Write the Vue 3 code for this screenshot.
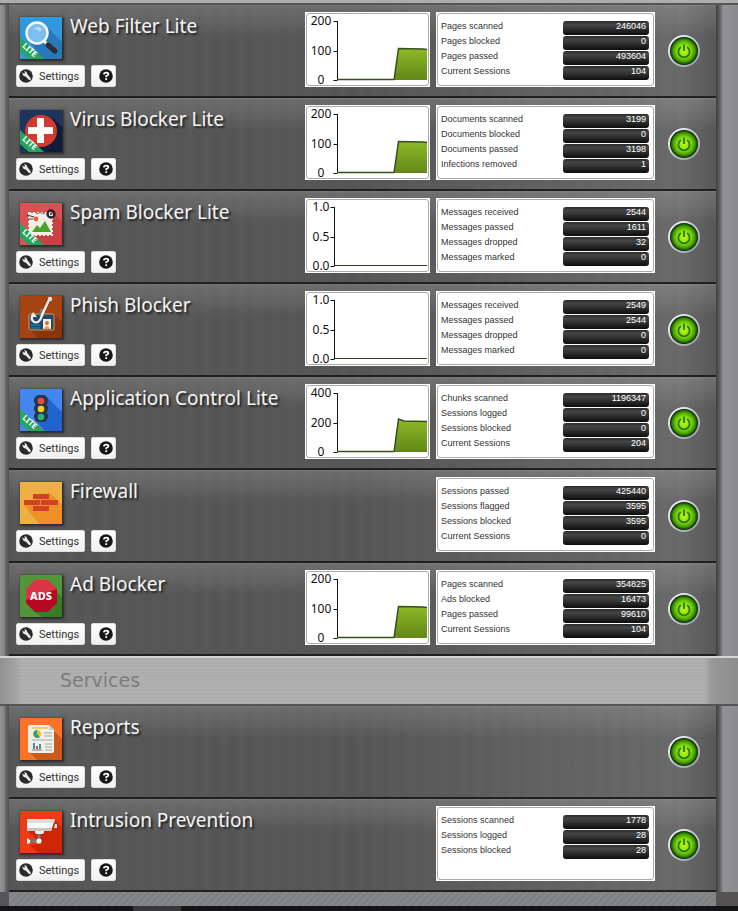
<template>
  <div class="rack">
    <div class="rack-top"></div>

    <section v-for="group in groups" :key="group.id" class="group">
      <header v-if="group.title" class="group-header">
        <h1>{{ group.title }}</h1>
      </header>

      <article v-for="app in group.apps" :key="app.name" class="app-row">
        <div class="app-info">
          <div class="app-heading">
            <svg class="app-icon" viewBox="0 0 42 42" aria-hidden="true">
              <g v-if="app.icon === 'web'">
                <rect width="42" height="42" fill="#3398db" />
                <path d="M25 8L42 25V42H22L9 23Z" fill="#2878b8" />
                <path d="M24 24L28 28" stroke="#e8eef2" stroke-width="3" />
                <path d="M28 28L35 34" stroke="#2b2d33" stroke-width="5" stroke-linecap="round" />
                <circle cx="17" cy="16" r="10.5" fill="#7dbdf0" stroke="#f7fbff" stroke-width="2.4" />
                <path d="M13 13Q17 7 22 12L20 15Q17 11 13 13Z" fill="#b8dcf8" />
              </g>
              <g v-else-if="app.icon === 'virus'">
                <rect width="42" height="42" fill="#1d355e" />
                <path d="M33 8L42 17V42H25L11 29Z" fill="#111d38" />
                <circle cx="21" cy="21" r="16" fill="#d23a30" />
                <path d="M17 8h7v9h9v7h-9v9h-7v-9H8v-7h9z" fill="#fff" />
              </g>
              <g v-else-if="app.icon === 'spam'">
                <rect width="42" height="42" fill="#dc5052" />
                <path d="M33 9L42 18V42H22L10 31Z" fill="#c64247" />
                <rect x="9" y="10" width="23" height="22" fill="#f2eee6" stroke="#f2eee6" stroke-width="2" stroke-dasharray="2 2" />
                <path d="M12 29L17 22L20 25L25 18L31 29Z" fill="#4aa12c" />
                <circle cx="16" cy="16" r="2.4" fill="#e8622d" />
                <path d="M7 12L14 14M8 16H13" stroke="#39424b" stroke-width="1.2" />
                <circle cx="31" cy="11" r="3.5" fill="none" stroke="#22272c" stroke-width="2.4" />
                <circle cx="31" cy="11" r="1" fill="#22272c" />
                <path d="M25 11Q20 8 16 11" fill="none" stroke="#777" stroke-width="1" />
              </g>
              <g v-else-if="app.icon === 'phish'">
                <rect width="42" height="42" fill="#a54312" />
                <path d="M34 18L42 26V42H18L9 33Z" fill="#8b350c" />
                <rect x="9" y="18" width="25" height="16" rx="1" fill="#234673" stroke="#d59b55" stroke-width="1" />
                <rect x="23" y="23" width="8" height="10" fill="#f0eee2" />
                <circle cx="27" cy="27" r="2" fill="#ce7034" />
                <path d="M24 33Q27 27 30 33" fill="#e5a329" />
                <path d="M11 29H20M11 32H20" stroke="#1794a1" stroke-width="1.2" />
                <path d="M20 20V14Q21 11 24 13V20" fill="#817d78" stroke="#746c67" />
                <path d="M29 4L22 19Q20 28 14 26Q10 23 13 18" fill="none" stroke="#f2f2ed" stroke-width="2.3" />
                <path d="M11 21L13 16L17 21" fill="#f2f2ed" />
                <circle cx="30" cy="3" r="2.2" fill="#d8e6ec" />
              </g>
              <g v-else-if="app.icon === 'control'">
                <rect width="42" height="42" fill="#4386ef" />
                <path d="M27 8L42 23V42H25L15 31Z" fill="#2264cc" />
                <path d="M14 9L17 12V17L14 12M28 9L25 12V17L28 12M14 17L17 20V25L14 20M28 17L25 20V25L28 20M14 25L17 28V32L14 28M28 25L25 28V32L28 28" fill="#26374c" stroke="#26374c" />
                <rect x="15" y="6" width="12" height="27" rx="4" fill="#26374c" />
                <circle cx="21" cy="12" r="3.3" fill="#ed4b3d" />
                <circle cx="21" cy="20" r="3.3" fill="#f9cf1c" />
                <circle cx="21" cy="28" r="3.3" fill="#24b47b" />
              </g>
              <g v-else-if="app.icon === 'firewall'">
                <rect width="42" height="42" fill="#efb043" />
                <path d="M29 11L42 22V42H19L4 23Z" fill="#ed9026" />
                <path d="M13 12h16v5H13zM4 18h16v5H4zM21 18h17v5H21zM13 24h16v5H13z" fill="#cf4225" />
              </g>
              <g v-else-if="app.icon === 'ads'">
                <rect width="42" height="42" fill="#52963a" />
                <path d="M36 16L42 22V42H22L13 36Z" fill="#387d24" />
                <path d="M15 5H28L37 14V28L28 37H15L6 28V14Z" fill="#d93546" />
                <path d="M6 25L37 14V28L28 37H15L6 28Z" fill="#b70821" />
                <text x="21" y="25" text-anchor="middle" class="ads-text">ADS</text>
              </g>
              <g v-else-if="app.icon === 'reports'">
                <rect width="42" height="42" fill="#fc7328" />
                <path d="M34 13L42 21V42H17L9 34Z" fill="#cd581c" />
                <path d="M10 7H29L34 12V33Q34 35 32 35H10Q8 35 8 33V9Q8 7 10 7Z" fill="#f1f0e8" />
                <path d="M29 7V12H34Z" fill="#c8ceca" />
                <path d="M12 10H28" stroke="#edc653" stroke-width="1.6" />
                <circle cx="17" cy="16" r="4" fill="#f2bf27" />
                <path d="M17 16V12A4 4 0 1 0 20 19Z" fill="#20a198" />
                <path d="M24 15H32M24 18H32M12 22H33M25 26H32M25 29H32M25 32H32" stroke="#9ca7a7" stroke-width="1" />
                <path d="M14 25V31M20 26V31" stroke="#37969f" stroke-width="2" />
                <path d="M17 28V31" stroke="#d64f58" stroke-width="2" />
                <path d="M12 32H22" stroke="#777" />
              </g>
              <g v-else>
                <rect width="42" height="42" fill="#ed3b15" />
                <path d="M7 19L21 33L10 34L18 42H42V16L35 9Z" fill="#ce2609" />
                <path d="M7 8H35L31 20H7Z" fill="#fafafa" />
                <path d="M7 8H35L34 12H7Z" fill="#dcdcdc" />
                <path d="M7 17H32L31 20H7Z" fill="#c9c6c3" />
                <path d="M35 13H37V17H34" fill="#ddd" />
                <path d="M15 20H24V22L22 23H17L15 22Z" fill="#eee" />
                <path d="M19 23V30M9 30H19" stroke="#77777a" stroke-width="3" />
                <circle cx="19" cy="30" r="2.6" fill="#f7f7f7" />
                <path d="M7 27L10 29V32L7 33Z" fill="#fff" />
              </g>
              <g v-if="app.lite">
                <path d="M0 20L24 42H9L0 34Z" fill="#28a45c" />
                <text transform="translate(8 35) rotate(42)" text-anchor="middle" class="lite-text">LITE</text>
              </g>
            </svg>
            <h2>{{ app.name }}</h2>
          </div>

          <div class="app-actions">
            <button type="button" class="action settings">
              <svg viewBox="0 0 14 14" aria-hidden="true">
                <circle cx="7" cy="7" r="6.8" fill="#292929" />
                <path d="M3.4 3.2L5.2 5L6 3.2L5 2.5Q8 1.8 8.3 5L11.8 9.5Q12 11.4 10.2 11.2L6.7 7.5Q3.5 7.5 3.4 3.2Z" fill="#e9e9e9" />
              </svg>
              <span>Settings</span>
            </button>
            <button type="button" class="action help" :aria-label="'Help for ' + app.name">
              <svg viewBox="0 0 14 14" aria-hidden="true">
                <circle cx="7" cy="7" r="6.8" fill="#171717" />
                <path d="M4.8 5.4Q5 3.6 7.1 3.6Q9.4 3.6 9.4 5.2Q9.4 6.3 7.2 7V8.3" fill="none" stroke="#fff" stroke-width="1.7" />
                <rect x="6.3" y="9.3" width="1.8" height="1.7" fill="#fff" />
              </svg>
            </button>
          </div>
        </div>

        <div v-if="app.scale" class="panel chart">
          <svg viewBox="0 0 121 71" role="img" :aria-label="app.name + ' sessions'">
            <defs>
              <linearGradient :id="'fill-' + app.icon" x1="0" y1="0" x2="0" y2="1">
                <stop offset="0" stop-color="#8fb927" />
                <stop offset="1" stop-color="#628718" />
              </linearGradient>
            </defs>
            <text v-for="(label, i) in app.scale" :key="label" x="14" :y="11 + i * 30 - (i === 2 ? 1 : 0)" text-anchor="middle">{{ label }}</text>
            <path :d="axisPath(app)" fill="none" stroke="#111" />
            <path v-if="app.line" :d="app.line + 'L120 66H87Z'" :fill="`url(#fill-${app.icon})`" />
            <path v-if="app.line" :d="'M30 65.5H87' + app.line.replace('M', 'L')" fill="none" stroke="#36501a" stroke-width="1.5" />
            <path v-else d="M28 65.5H120" stroke="#3a3a22" />
          </svg>
        </div>

        <div v-if="app.stats" class="panel stats">
          <table>
            <tbody>
              <tr v-for="stat in app.stats" :key="stat[0]">
                <th scope="row">{{ stat[0] }}</th>
                <td><span class="value">{{ stat[1] }}</span></td>
              </tr>
            </tbody>
          </table>
        </div>

        <button type="button" class="power" :aria-label="'Turn ' + app.name + ' off'" aria-pressed="true">
          <svg viewBox="0 0 32 32" aria-hidden="true">
            <defs>
              <radialGradient :id="'glow-' + app.icon">
                <stop offset="0" stop-color="#b8fa1c" />
                <stop offset=".5" stop-color="#86e008" />
                <stop offset=".8" stop-color="#459f04" />
                <stop offset="1" stop-color="#12400a" />
              </radialGradient>
              <linearGradient :id="'ring-' + app.icon" x1="0" y1="0" x2="1" y2="1">
                <stop offset="0" stop-color="#fff" />
                <stop offset=".5" stop-color="#c4c8cc" />
                <stop offset="1" stop-color="#8e979d" />
              </linearGradient>
            </defs>
            <circle cx="16" cy="16" r="16" :fill="`url(#ring-${app.icon})`" />
            <circle cx="16" cy="16" r="14" fill="#102610" />
            <circle cx="16" cy="16" r="13.4" :fill="`url(#glow-${app.icon})`" />
            <path d="M12.8 12.1A5.6 5.6 0 1 0 19.2 12.1M16 9.5V16" fill="none" stroke="#2f7405" stroke-width="1.8" />
          </svg>
        </button>
      </article>
    </section>

    <div class="rack-bottom"></div>
    <footer class="taskbar"><span></span></footer>
  </div>
</template>

<script setup>
import { ref } from 'vue'

const sessionLine = 'M87 66L91.5 34.5L116 35L120 35.5'

const groups = ref([
  {
    id: 'apps',
    apps: [
      {
        name: 'Web Filter Lite',
        icon: 'web',
        lite: true,
        scale: ['200', '100', '0'],
        line: sessionLine,
        stats: [['Pages scanned', 246046], ['Pages blocked', 0], ['Pages passed', 493604], ['Current Sessions', 104]]
      },
      {
        name: 'Virus Blocker Lite',
        icon: 'virus',
        lite: true,
        scale: ['200', '100', '0'],
        line: sessionLine,
        stats: [['Documents scanned', 3199], ['Documents blocked', 0], ['Documents passed', 3198], ['Infections removed', 1]]
      },
      {
        name: 'Spam Blocker Lite',
        icon: 'spam',
        lite: true,
        scale: ['1.0', '0.5', '0.0'],
        stats: [['Messages received', 2544], ['Messages passed', 1611], ['Messages dropped', 32], ['Messages marked', 0]]
      },
      {
        name: 'Phish Blocker',
        icon: 'phish',
        scale: ['1.0', '0.5', '0.0'],
        stats: [['Messages received', 2549], ['Messages passed', 2544], ['Messages dropped', 0], ['Messages marked', 0]]
      },
      {
        name: 'Application Control Lite',
        icon: 'control',
        lite: true,
        scale: ['400', '200', '0'],
        line: 'M87 66L91.5 33L97 35L120 35.5',
        stats: [['Chunks scanned', 1196347], ['Sessions logged', 0], ['Sessions blocked', 0], ['Current Sessions', 204]]
      },
      {
        name: 'Firewall',
        icon: 'firewall',
        stats: [['Sessions passed', 425440], ['Sessions flagged', 3595], ['Sessions blocked', 3595], ['Current Sessions', 0]]
      },
      {
        name: 'Ad Blocker',
        icon: 'ads',
        scale: ['200', '100', '0'],
        line: sessionLine,
        stats: [['Pages scanned', 354825], ['Ads blocked', 16473], ['Pages passed', 99610], ['Current Sessions', 104]]
      }
    ]
  },
  {
    id: 'services',
    title: 'Services',
    apps: [
      { name: 'Reports', icon: 'reports' },
      {
        name: 'Intrusion Prevention',
        icon: 'intrusion',
        stats: [['Sessions scanned', 1778], ['Sessions logged', 28], ['Sessions blocked', 28]]
      }
    ]
  }
])

// Decimal labels are narrower, so their axis sits closer to them
const axisPath = (app) => {
  const x = app.line ? 30.5 : 27.5
  return `M${x} 7V66M${x - 4} 7.5H${x}M${x - 4} 37.5H${x}M${x - 4} 66.5H${x}`
}
</script>

<style>
body {
  margin: 0;
  background: #111;
}
</style>

<style scoped>
.rack {
  font-family: "Noto Sans", sans-serif;
  background: linear-gradient(90deg, #949496 0, #868688 4px, #626264 6px, #505052 9px, transparent 9px),
    linear-gradient(270deg, #8b8b8d 0, #929294 15px, #626264 18px, #505052 20px, #3c3c3e 22px, #555 22px);
}

.rack-top {
  box-sizing: border-box;
  height: 5px;
  background: #adadad;
  border-bottom: 2px solid #555;
}

.group-header {
  box-sizing: border-box;
  display: flex;
  align-items: center;
  height: 50px;
  padding: 0 60px 2px;
  border-top: 2px solid #d6d6d6;
  border-bottom: 2px solid #555557;
  background: linear-gradient(90deg, #929292 0, #a0a0a0 14px, transparent 22px, transparent calc(100% - 34px), #989898 calc(100% - 26px), #8c8c8c 100%),
    repeating-linear-gradient(180deg, #aaa 0, #b1b1b1 2px, #acacac 5px, #b3b3b3 7px);
}

.group-header h1 {
  margin: 0;
  color: #7d7d7d;
  font-family: "DejaVu Sans", sans-serif;
  font-size: 19px;
  font-weight: normal;
}

.app-row {
  box-sizing: border-box;
  display: flex;
  align-items: flex-start;
  height: 93px;
  margin: 0 22px 0 9px;
  padding: 7px 16px 0 7px;
  border-bottom: 2px solid #202022;
  background: linear-gradient(180deg, rgba(255, 255, 255, 0.2) 0, rgba(255, 255, 255, 0.13) 2px, rgba(255, 255, 255, 0.08) 16px, transparent 32px),
    repeating-linear-gradient(90deg, transparent 0, rgba(0, 0, 0, 0.02) 3px, transparent 5px, rgba(255, 255, 255, 0.01) 11px, transparent 17px),
    linear-gradient(90deg, #565657 0, #565657 50%, #656566 85%, #69696a 95%, #575758 100%);
}

.app-info {
  flex: 1;
  min-width: 0;
  padding-top: 5px;
}

.app-heading {
  display: flex;
  gap: 8px;
  height: 48px;
  padding-left: 4px;
}

.app-icon {
  flex: none;
  width: 42px;
  height: 42px;
  box-shadow: 1px 1px 2px 1px rgba(20, 20, 20, 0.65);
}

.ads-text {
  fill: #fff;
  font-size: 11px;
  font-weight: 800;
}

.lite-text {
  fill: #fff;
  font-size: 8px;
  font-weight: bold;
}

.app-heading h2 {
  margin: 0;
  color: #f4f4f4;
  font-size: 19px;
  font-weight: normal;
  line-height: 18px;
  white-space: nowrap;
  text-shadow: 2px 2px 2px #222;
}

.app-actions {
  display: flex;
  gap: 6px;
}

.action {
  box-sizing: border-box;
  display: flex;
  align-items: center;
  height: 22px;
  padding: 0 6px 0 2px;
  border: 1px solid #ddd;
  border-radius: 2px;
  background: linear-gradient(#fff, #f0f0f0);
  color: #333;
  font-family: Roboto, sans-serif;
  font-size: 11px;
  cursor: pointer;
}

.action svg {
  flex: none;
  width: 14px;
  height: 14px;
}

.settings {
  gap: 6px;
  width: 69px;
  white-space: nowrap;
}

.help {
  width: 25px;
  padding: 0 3px 0 7px;
}

.panel {
  box-sizing: border-box;
  flex: none;
  height: 75px;
  margin-left: 6px;
  border: 1px solid #fff;
  background: #fff;
}

.chart {
  width: 125px;
}

.chart svg {
  display: block;
  box-sizing: border-box;
  width: 123px;
  height: 73px;
  border: 1px solid #aaa;
  border-radius: 3px;
  overflow: visible;
}

.chart text {
  fill: #111;
  font-size: 12px;
}

.stats {
  width: 219px;
}

.stats table {
  display: block;
  box-sizing: border-box;
  height: 73px;
  padding: 7px 4px 0 3px;
  border: 1px solid #aaa;
  border-radius: 3px;
  border-spacing: 0;
  color: #333;
  font-family: "Liberation Sans", sans-serif;
  font-size: 9px;
  line-height: 10px;
}

.stats th,
.stats td {
  height: 15px;
  padding: 0;
  vertical-align: top;
}

.stats th {
  width: 122px;
  font-weight: normal;
  text-align: left;
}

.value {
  box-sizing: border-box;
  display: block;
  width: 86px;
  height: 14px;
  padding-right: 3px;
  border-radius: 3px;
  background: linear-gradient(#2b2b2b, #454545 25%, #303030 55%, #0c0c0c);
  color: #fff;
  text-align: right;
}

.power {
  flex: none;
  width: 32px;
  height: 32px;
  margin: 23px 0 0 13px;
  padding: 0;
  border: 0;
  border-radius: 50%;
  background: none;
  cursor: pointer;
}

.power svg {
  display: block;
  width: 32px;
  height: 32px;
}

.rack-bottom {
  height: 14px;
  margin: 0 22px 0 9px;
  background: repeating-linear-gradient(135deg, #858789 0, #858789 3px, #7d7f81 3px, #7d7f81 5px);
  box-shadow: -9px 0 #555557, 22px 0 #555253;
}

.taskbar {
  height: 5px;
  padding-left: 133px;
  background: #151517;
}

.taskbar span {
  display: block;
  width: 44px;
  height: 5px;
  border-right: 4px double #333;
  background: #38383a;
}
</style>
